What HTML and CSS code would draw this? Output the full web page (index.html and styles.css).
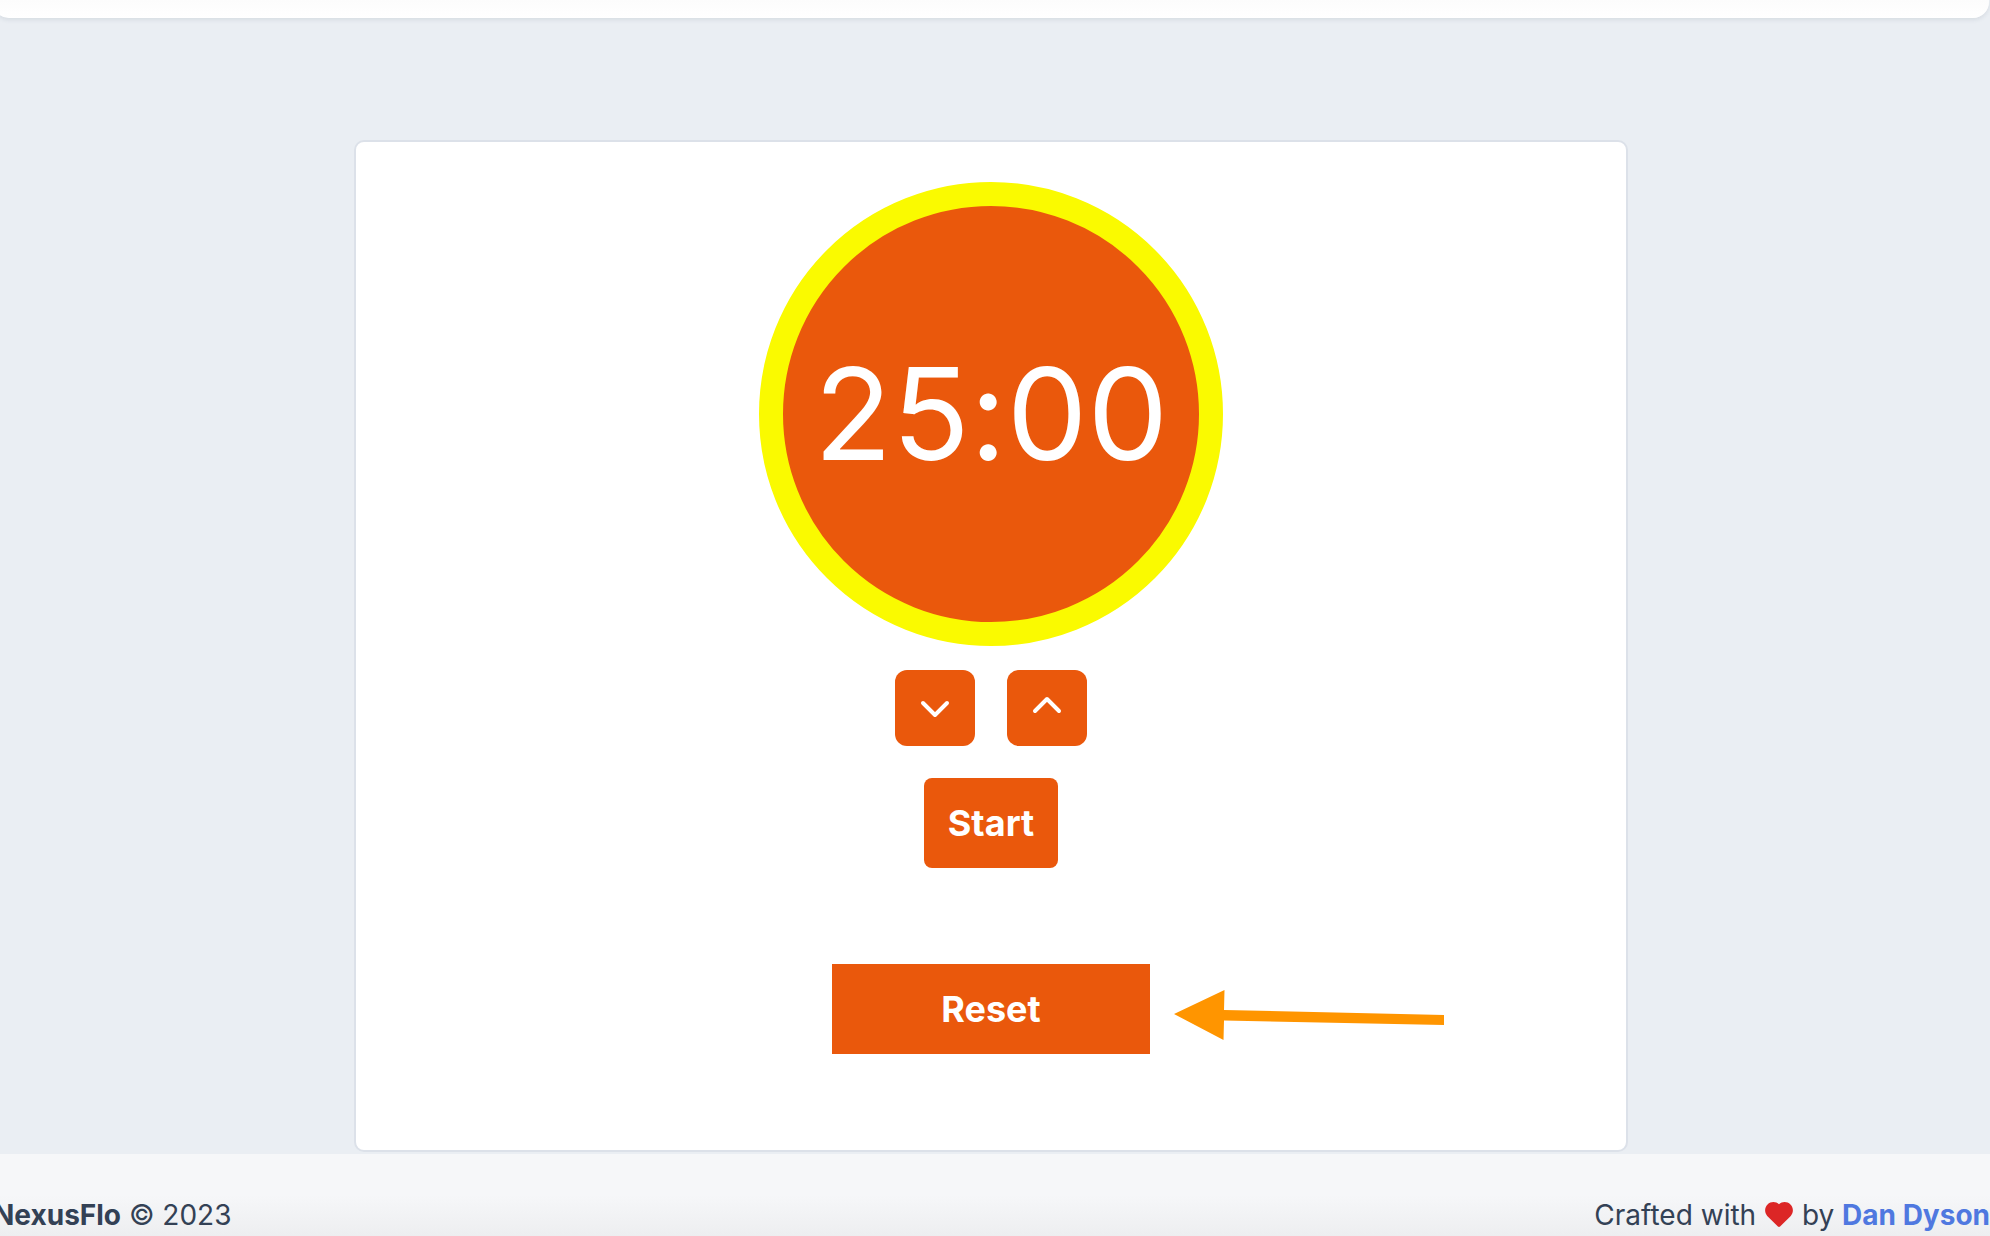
FILE: index.html
```html
<!DOCTYPE html>
<html lang="en">
<head>
<meta charset="utf-8">
<meta name="viewport" content="width=device-width, initial-scale=1">
<title>NexusFlo</title>
<link rel="stylesheet" href="styles.css">
</head>
<body>
<div class="shell">
  <header class="topbar"></header>
  <main class="main">
    <section class="card" aria-label="Timer">
      <div class="dial" role="timer">25:00</div>
      <div class="steps">
        <button class="step" type="button" aria-label="Decrease time">
          <svg class="chevron" viewBox="0 0 48 48" aria-hidden="true"><path d="M12 19L24 31L36 19"/></svg>
        </button>
        <button class="step" type="button" aria-label="Increase time">
          <svg class="chevron" viewBox="0 0 48 48" aria-hidden="true"><path d="M12 27L24 15L36 27"/></svg>
        </button>
      </div>
      <button class="action start" type="button">Start</button>
      <div class="reset-row">
        <button class="action reset" type="button">Reset</button>
        <svg class="arrow" viewBox="0 0 271 50" aria-hidden="true"><path d="M0 24L50.5 0L50 20L270 25V35L50 30.5L49.5 50Z"/></svg>
      </div>
    </section>
  </main>
</div>
<footer class="footer">
  <p class="note"><strong>NexusFlo</strong> © 2023</p>
  <p class="note">Crafted with <svg class="heart" viewBox="2 3 20 18" role="img" aria-label="love"><path d="M12 4.53c2.35-2.11 5.98-2.04 8.24.23 2.26 2.27 2.34 5.88.24 8.24l-7.7 7.6q-.78.7-1.56 0l-7.7-7.6c-2.1-2.36-2.02-5.97.24-8.24 2.26-2.26 5.89-2.34 8.24-.23z"/></svg> by <a class="author" href="#">Dan Dyson</a></p>
</footer>
</body>
</html>
```
FILE: styles.css
```css
* { box-sizing: border-box; }

body {
  margin: 0;
  min-height: 100vh;
  display: flex;
  flex-direction: column;
  overflow-x: hidden;
  background: #eaeef3;
  color: #334155;
  font-family: Inter, "Liberation Sans", sans-serif;
}

.shell { margin: 0 1px 0 -7px; }

.topbar {
  height: 18px;
  border-radius: 0 0 16px 16px;
  background: linear-gradient(#fcfcfc, #fff);
  box-shadow: 0 2px 4px rgba(51, 65, 85, 0.1);
}

.main { padding: 122px 24px 2px; }

.card {
  max-width: 1274px;
  margin: 0 auto;
  padding: 40px 0 96px;
  display: flex;
  flex-direction: column;
  align-items: center;
  border: 2px solid #dce1e9;
  border-radius: 10px;
  background: #fff;
}

.dial {
  width: 464px;
  height: 464px;
  display: flex;
  align-items: center;
  justify-content: center;
  border: 24px solid #fafa00;
  border-radius: 50%;
  background: #ea580c;
  color: #fff;
  font-size: 128px;
  line-height: 128px;
  font-feature-settings: "calt" 0;
}

button {
  border: 0;
  background: #ea580c;
  color: #fff;
  font-family: inherit;
  cursor: pointer;
}

.steps {
  display: flex;
  gap: 32px;
  margin: 24px 0 32px;
}

.step {
  display: grid;
  place-items: center;
  width: 80px;
  height: 76px;
  padding: 0;
  border-radius: 12px;
}

.chevron {
  width: 48px;
  height: 48px;
  fill: none;
  stroke: currentColor;
  stroke-width: 4;
  stroke-linecap: round;
  stroke-linejoin: round;
}

.action {
  padding: 24px;
  font-size: 36px;
  line-height: 42px;
  font-weight: 700;
}

.start { border-radius: 8px; }

.reset-row {
  position: relative;
  width: 25%;
  margin-top: 96px;
}

.reset { display: block; width: 100%; }

.arrow {
  position: absolute;
  top: 26px;
  left: calc(100% + 24px);
  width: 271px;
  height: 50px;
  fill: #ff9500;
}

.footer {
  flex: 1;
  display: flex;
  justify-content: space-between;
  padding-top: 40px;
  margin-left: -7px;
  background: linear-gradient(#f6f7f9 50%, #edeef0);
}

.note {
  margin: 0;
  font-size: 28px;
  line-height: 42px;
}

.heart {
  width: 28px;
  height: 25px;
  margin: 0 1px;
  vertical-align: -2px;
  fill: #dc2626;
}

.author {
  color: #4f78e0;
  font-weight: 700;
  text-decoration: none;
}
```
